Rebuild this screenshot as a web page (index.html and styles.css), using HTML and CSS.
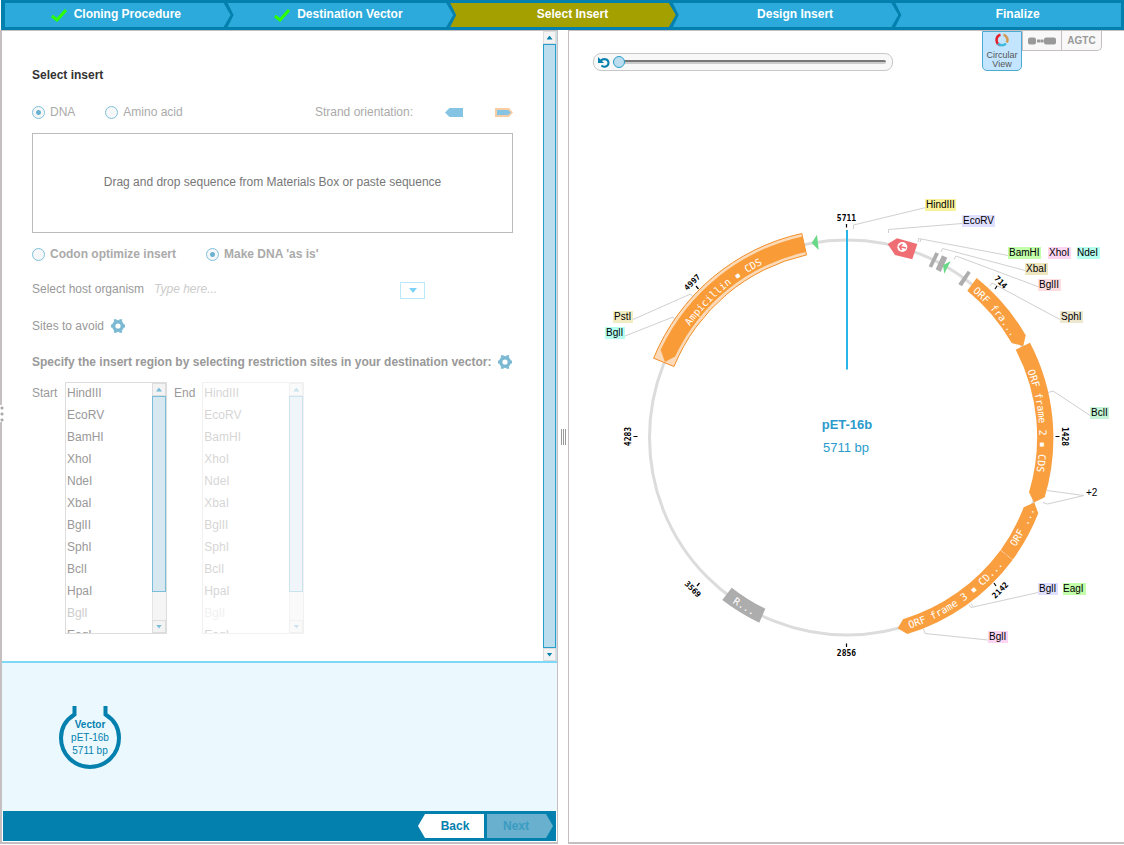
FILE: index.html
```html
<!DOCTYPE html>
<html lang="en">
<head>
<meta charset="utf-8">
<title>Cloning wizard - Select Insert</title>
<link rel="stylesheet" href="styles.css">
</head>
<body>
<div class="app">
  <nav class="steps" aria-label="Wizard steps">
    <button class="step step-first" type="button"><span class="step-label"><svg class="check" viewBox="0 0 16 13" aria-hidden="true"><path d="M1 7l5 4 9-10"/></svg>Cloning Procedure</span></button>
    <button class="step" type="button"><span class="step-label"><svg class="check" viewBox="0 0 16 13" aria-hidden="true"><path d="M1 7l5 4 9-10"/></svg>Destination Vector</span></button>
    <button class="step step-current" type="button" aria-current="step"><span class="step-label">Select Insert</span></button>
    <button class="step" type="button"><span class="step-label">Design Insert</span></button>
    <button class="step step-last" type="button"><span class="step-label">Finalize</span></button>
  </nav>

  <main class="workspace">
    <section class="left-panel">
      <span class="edge-handle"></span>
      <div class="form-area">
        <form class="form">
          <h1 class="title">Select insert</h1>
          <div class="row row-type">
            <label class="choice"><input class="radio" type="radio" name="type" checked>DNA</label>
            <label class="choice"><input class="radio" type="radio" name="type">Amino acid</label>
            <div class="strand">
              <span>Strand orientation:</span>
              <button class="tag" type="button" aria-label="Reverse strand"><svg viewBox="0 0 18 9"><path d="M0 4.500L4.500 0H18v9H4.500z" fill="#86c4e3"/></svg></button>
              <button class="tag" type="button" aria-label="Forward strand"><svg viewBox="0 0 18 9"><path d="M0 0h14l4 4.500L14 9H0z" fill="#f8cda4"/><path d="M2 2h11l3 2.500L13 7H2z" fill="#86c4e3"/></svg></button>
            </div>
          </div>
          <textarea class="sequence" aria-label="Sequence" placeholder="Drag and drop sequence from Materials Box or paste sequence"></textarea>
          <div class="row row-mode">
            <label class="choice"><input class="radio" type="radio" name="mode">Codon optimize insert</label>
            <label class="choice"><input class="radio" type="radio" name="mode" checked>Make DNA 'as is'</label>
          </div>
          <div class="row row-host">
            <label for="host">Select host organism</label>
            <input class="host-input" id="host" type="text" placeholder="Type here...">
            <button class="drop-button" type="button" aria-label="Show organisms"><svg viewBox="0 0 8 5"><path d="M0 0h8L4 5z"/></svg></button>
          </div>
          <div class="row row-sites">
            <span>Sites to avoid</span>
            <button class="gear" type="button" aria-label="Sites settings"><svg viewBox="0 0 14 14"><use href="#gear-shape"/></svg></button>
          </div>
          <div class="row row-specify">
            <span>Specify the insert region by selecting restriction sites in your destination vector:</span>
            <button class="gear" type="button" aria-label="Restriction site settings"><svg viewBox="0 0 14 14"><g id="gear-shape"><circle cx="7" cy="7" r="4.300" fill="none" stroke="#7bb9d3" stroke-width="3.400"/><path d="M4.300 2.500V.3M9.700 2.500V.3M4.300 11.500v2.200M9.700 11.500v2.200M2 7H0M12 7h2" stroke="#7bb9d3" stroke-width="2.800"/></g></svg></button>
          </div>
          <div class="row row-lists">
            <label class="start-label" for="start">Start</label>
            <div class="list">
              <select class="options" id="start" size="11">
                <option>HindIII</option><option>EcoRV</option><option>BamHI</option><option>XhoI</option><option>NdeI</option><option>XbaI</option><option>BglII</option><option>SphI</option><option>BclI</option><option>HpaI</option><option disabled>BglI</option><option>EagI</option>
              </select>
              <div class="bar bar-list"><span class="arrow arrow-up"></span><span class="thumb"></span><span class="track"></span><span class="arrow arrow-down"></span></div>
            </div>
            <label for="end">End</label>
            <div class="list list-off">
              <select class="options" id="end" size="11">
                <option>HindIII</option><option>EcoRV</option><option>BamHI</option><option>XhoI</option><option>NdeI</option><option>XbaI</option><option>BglII</option><option>SphI</option><option>BclI</option><option>HpaI</option><option disabled>BglI</option><option>EagI</option>
              </select>
              <div class="bar bar-list"><span class="arrow arrow-up"></span><span class="thumb"></span><span class="track"></span><span class="arrow arrow-down"></span></div>
            </div>
          </div>
        </form>
        <div class="bar bar-main"><span class="arrow arrow-up"></span><span class="thumb"></span><span class="arrow arrow-down"></span></div>
      </div>
      <div class="vector-area">
        <svg class="vector" viewBox="0 0 62 63">
          <path d="M15.500 0v8.500C7.500 13.500 2 22 2 32a29 29 0 0 0 58 0c0-10-5.500-18.500-13.500-23.500V0" fill="none" stroke="#0480ae" stroke-width="4"/>
          <text class="vector-text vector-name" x="31" y="22">Vector</text>
          <text class="vector-text" x="31" y="35">pET-16b</text>
          <text class="vector-text" x="31" y="48">5711 bp</text>
        </svg>
      </div>
      <footer class="actions">
        <button class="action action-back" type="button">Back</button>
        <button class="action action-next" type="button" disabled>Next</button>
      </footer>
    </section>

    <div class="splitter"><span class="grip"></span></div>

    <section class="map-panel">
      <div class="toolbar">
        <div class="zoom">
          <button class="reset" type="button" aria-label="Reset rotation"><svg viewBox="0 0 12 11"><path d="M3 3.500C5 1.200 10.500 1.800 10.500 5.800 10.500 9.800 5.500 10.600 3.500 8.500" fill="none" stroke="#0480ae" stroke-width="2"/><path d="M0 0v6h6z" fill="#0480ae"/></svg></button>
          <input class="slider" type="range" min="0" max="100" value="0" aria-label="Rotate map">
        </div>
        <div class="views">
          <button class="view view-active" type="button">
            <svg class="ring" viewBox="0 0 14 14"><g fill="none" stroke-width="2.600"><path d="M5.500 12.200A5.400 5.400 0 0 1 5.500 1.800" stroke="#e3202c"/><path d="M8.500 1.800A5.400 5.400 0 0 1 11.800 9.500" stroke="#d39a55"/><path d="M3 10.500A5.400 5.400 0 0 0 11 10.500" stroke="#3fbbdc"/></g></svg>
            <span>Circular<br>View</span>
          </button>
          <button class="view" type="button" aria-label="Linear view"><svg class="linear" viewBox="0 0 28 8"><path d="M9 4h10" stroke="#bbb"/><rect width="8" height="7" y=".5" rx="2" fill="#999"/><rect x="16" width="12" height="7" y=".5" rx="2" fill="#999"/><path d="M9 2.500h3v3H9zM12.500 2.500h3v3h-3z" fill="#999"/></svg></button>
          <button class="view view-last" type="button">AGTC</button>
        </div>
      </div>

      <svg class="map" viewBox="569 72 555 700" role="img" aria-label="Circular map of pET-16b">
        <defs>
          <path id="arc-cw" d="M847 630A192.500 192.500 0 1 1 847 245A192.500 192.500 0 1 1 847 630"/>
          <path id="arc-ccw" d="M646 437.500A201 201 0 1 0 1048 437.500A201 201 0 1 0 646 437.500"/>
        </defs>
        <circle cx="847" cy="437.500" r="197.500" fill="none" stroke="#dcdcdc" stroke-width="3"/>

        <g class="leaders">
          <path d="M853.500 229v-4L926 207.500M888.500 233v-3.500L962 223.500M918 242l.5-3.500L1008 255.500M920 242l1-3M941 252l1.500-3.500L1025 270.500M954 259.500l2-3.500L1039 287M990 286l2-3L1060 319.500M1048 392.500l5-1.500L1091 416M1047 490.500l37 5L1047.500 504l-4.500-1.500M969 604.500l2 3L1038 592.500M971 603.500l2 3M923.500 629l1.500 4.500L988 640M693 297l-2.500-3L633 319.500M675 319.500l-2-2.500L625 336"/>
        </g>

        <path d="M801.800 233.500A209 209 0 0 0 653.600 358.200L674 366.500A187 187 0 0 1 806.500 254.900z" fill="#fcdab8" stroke="#f28e27"/>
        <path d="M802.400 236.400A206 206 0 0 0 660.600 349.800L665 362L675.100 356.600A190 190 0 0 1 805.900 252z" fill="#f99b37"/>
        <g fill="#f99f40">
          <path d="M976.700 278A206 206 0 0 1 1025.700 335.300L1023.300 346L1011.700 343A190 190 0 0 0 967.300 290.700z"/>
          <path d="M1030 342.700A206 206 0 0 1 1044.700 497.300L1034 502.400L1029 492.300A190 190 0 0 0 1015.700 349.700z"/>
          <path d="M1034.300 502.600L1038.300 513.300A206 206 0 0 1 1012.700 559.700L1000.700 550A190 190 0 0 0 1023.700 507.300z"/>
          <path d="M1012.600 559.900A206 206 0 0 1 907.300 634L897.700 628.300L903 619.300A190 190 0 0 0 1000.500 550.200z"/>
        </g>
        <path d="M731.700 587.700L722.300 600A206 206 0 0 0 759.300 622.700L765.300 608.700A190 190 0 0 1 731.700 587.700z" fill="#adadad"/>
        <path d="M887.700 244L897 238.300L917.300 244L912.300 259.300L895 255z" fill="#ee6e73"/>
        <circle cx="902.300" cy="247" r="5" fill="#fff"/>
        <path d="M906 248l-6.500-1.500M902.500 244l-3 2.500 2 3.500" fill="none" stroke="#ee6e73" stroke-width="1.600"/>
        <path d="M935.300 252.300L939 253.700L932 267.700L928.700 266.300zM942 255.300L947.300 257.700L940.700 272L935.700 269.300zM967.700 270.700L970.700 272.700L962 286.300L958.300 284z" fill="#adadad"/>
        <path d="M950.700 261L943 265.300L944.300 273.700zM811.700 243L817 234.700L818.700 250z" fill="#68d987"/>
        <path d="M847 230v139.500" stroke="#27b4e8" stroke-width="2"/>

        <g class="feature">
          <text><textPath href="#arc-cw" startOffset="38.800%">Ampicillin ▪ CDS</textPath></text>
          <text><textPath href="#arc-cw" startOffset="63.800%">ORF fra...</textPath></text>
          <text><textPath href="#arc-cw" startOffset="73.600%">ORF frame 2 ▪ CDS</textPath></text>
          <text><textPath href="#arc-ccw" startOffset="34.600%">ORF frame 3 ▪ CD...</textPath></text>
          <text><textPath href="#arc-ccw" startOffset="42.500%">ORF ...</textPath></text>
          <text><textPath href="#arc-ccw" startOffset="16.300%">R...</textPath></text>
        </g>

        <path d="M846.500 224v3.500M846.500 643.500v3.500M1055.500 436.500h4M633.500 436.500h4M696 286l2.500 3M997 286l-2 3M994 583l2 3M697 586l2.500-3" stroke="#000" stroke-width="1.200"/>
        <g class="ticks">
          <text x="846.500" y="221">5711</text>
          <text x="846.500" y="656">2856</text>
          <text transform="translate(1064.500 436.500) rotate(90)" y="3">1428</text>
          <text transform="translate(628 436.500) rotate(-90)" y="3">4283</text>
          <text transform="translate(692 282) rotate(-45)" y="3">4997</text>
          <text transform="translate(1001 282) rotate(45)" y="3">714</text>
          <text transform="translate(1000 590) rotate(-45)" y="3">2142</text>
          <text transform="translate(693 589) rotate(45)" y="3">3569</text>
        </g>

        <g class="sites">
          <rect x="925" y="199" width="31" height="12" fill="#f8f19a"/><text x="926" y="208">HindIII</text>
          <rect x="962" y="215" width="33" height="12" fill="#dfdfff"/><text x="963" y="224">EcoRV</text>
          <rect x="1008" y="247" width="33" height="12" fill="#c3ffab"/><text x="1009" y="256">BamHI</text>
          <rect x="1048" y="247" width="23" height="12" fill="#fcd5f3"/><text x="1049" y="256">XhoI</text>
          <rect x="1077" y="247" width="23" height="12" fill="#b5fff1"/><text x="1077" y="256">NdeI</text>
          <rect x="1025" y="263" width="23" height="12" fill="#eee6c0"/><text x="1026" y="272">XbaI</text>
          <rect x="1038" y="279" width="23" height="12" fill="#fddde0"/><text x="1039" y="288">BglII</text>
          <rect x="1060" y="311" width="23" height="12" fill="#ece7ce"/><text x="1061" y="320">SphI</text>
          <rect x="1090" y="407" width="19" height="12" fill="#c5f3d5"/><text x="1091" y="416">BclI</text>
          <text x="1086" y="496">+2</text>
          <rect x="1038" y="583" width="20" height="12" fill="#dfdfff"/><text x="1039" y="592">BglI</text>
          <rect x="1063" y="583" width="23" height="12" fill="#c3ffab"/><text x="1063" y="592">EagI</text>
          <rect x="988" y="631" width="20" height="12" fill="#fcd5f3"/><text x="989" y="640">BglI</text>
          <rect x="613" y="311" width="20" height="12" fill="#f2ecc3"/><text x="614" y="320">PstI</text>
          <rect x="605" y="327" width="20" height="12" fill="#b5fff1"/><text x="606" y="336">BglI</text>
        </g>

        <text class="plasmid plasmid-name" x="847" y="429">pET-16b</text>
        <text class="plasmid" x="846" y="452">5711 bp</text>
      </svg>
    </section>
  </main>
</div>
</body>
</html>
```
FILE: styles.css
```css
* { box-sizing: border-box; }

body {
  margin: 0;
  background: #fff;
  color: #999;
  font: 12px/14px "Liberation Sans", Arial, sans-serif;
}

button, input, select, textarea {
  margin: 0;
  padding: 0;
  border: 0;
  border-radius: 0;
  background: none;
  color: inherit;
  font: inherit;
  outline: 0;
}

.app {
  display: flex;
  flex-direction: column;
  min-height: 100vh;
  padding-bottom: 1px;
}

/* Wizard steps */
.steps {
  display: flex;
  height: 30px;
  margin-left: 1px;
  padding: 3px 3px 3px 4px;
  background: #0480ae;
}

.step {
  display: flex;
  flex: 1 1 0;
  justify-content: center;
  height: 24px;
  padding-left: 19px;
  background: #2caadb;
  color: #fff;
  font-weight: bold;
  line-height: 22px;
  clip-path: polygon(0 0, calc(100% - 7px) 0, 100% 50%, calc(100% - 7px) 100%, 0 100%, 6px 50%);
}

.step + .step { margin-left: -3px; }
.step-first { clip-path: polygon(0 0, calc(100% - 7px) 0, 100% 50%, calc(100% - 7px) 100%, 0 100%); }
.step-last { clip-path: polygon(0 0, 100% 0, 100% 100%, 0 100%, 6px 50%); }
.step-current { background: #a3a000; }
.step-label { position: relative; }

.check {
  position: absolute;
  top: 6px;
  right: 100%;
  width: 16px;
  height: 13px;
  margin-right: 7px;
  fill: none;
  stroke: #2cff05;
  stroke-width: 3;
}

/* Panels */
.workspace {
  display: grid;
  flex: 1;
  grid-template-columns: minmax(0, 558fr) 10px minmax(0, 556fr);
}

.left-panel {
  position: relative;
  display: flex;
  flex-direction: column;
  border: solid #c6bfc2;
  border-width: 1px 1px 2px 2px;
}

.edge-handle {
  position: absolute;
  top: 374px;
  left: -2px;
  width: 4px;
  height: 17px;
  background: radial-gradient(circle, #aaa 1px, #fff 2px) 0 0 / 4px 6px;
}

.form-area {
  display: flex;
  flex: 1;
}

.form {
  flex: 1;
  min-width: 0;
  padding: 37px 30px 27px;
}

.title {
  margin: 0 0 23px;
  color: #333;
  font-size: 12px;
  line-height: 14px;
}

.row {
  display: flex;
  align-items: center;
}

.row-type, .row-mode {
  gap: 30px;
  margin-bottom: 14px;
  color: #aaa;
}

.row-mode {
  margin: 14px 0 21px;
  font-weight: bold;
}

.choice {
  display: flex;
  align-items: center;
  gap: 5px;
}

.radio {
  appearance: none;
  width: 13px;
  height: 13px;
  border: 1px solid #7fc0dc;
  border-radius: 50%;
  background: #f5f7f8;
}

.radio:checked { background: radial-gradient(circle, #6db1d0 2px, #f5f7f8 3px); }

.strand {
  display: flex;
  align-items: center;
  gap: 32px;
  margin-left: auto;
}

.tag {
  width: 18px;
  height: 9px;
}

.tag svg, .gear svg, .reset svg, .drop-button svg, .map, .vector { display: block; }

.sequence {
  display: block;
  width: 100%;
  height: 100px;
  padding-top: 41px;
  border: 1px solid #bbb;
  text-align: center;
  resize: none;
}

.sequence::placeholder { color: #777; }

.row-host {
  align-items: flex-start;
  margin-bottom: 20px;
}

.host-input {
  width: 246px;
  height: 14px;
  margin-left: 10px;
  font-style: italic;
}

.host-input::placeholder { color: #ccc; }

.drop-button {
  display: grid;
  place-items: center;
  width: 25px;
  height: 17px;
  border: 1px solid #b9e9fb;
}

.drop-button svg {
  width: 8px;
  height: 5px;
  fill: #7dd3f5;
}

.row-sites, .row-specify { gap: 7px; }
.row-sites { margin-bottom: 22px; }

.row-specify {
  margin-bottom: 13px;
  font-weight: bold;
  white-space: nowrap;
}

.gear {
  width: 14px;
  height: 14px;
}

.row-lists {
  align-items: flex-start;
  gap: 7px;
}

.row-lists label { padding-top: 4px; }
.start-label { width: 26px; }

.list {
  display: flex;
  width: 102px;
  height: 252px;
  border: 1px solid #ddd;
}

.list-off { opacity: .4; }

.options {
  flex: 1;
  height: 250px;
  overflow: hidden;
  scrollbar-width: none;
}

.options option {
  height: 22px;
  min-height: 22px;
  padding: 3px 1px 0;
  color: #999;
}

.options option:disabled { color: #ccc; }
.list-off option:disabled { color: #ddd; }

/* Scroll bars */
.bar {
  display: flex;
  flex-direction: column;
  width: 14px;
}

.bar-main { border-right: 1px solid #c6e0ec; }

.arrow {
  display: grid;
  place-items: center;
  height: 13px;
  border: 1px solid #ddd;
  background: #f3f3f3;
}

.arrow::before {
  width: 6px;
  height: 4px;
  background: #0480ae;
  content: "";
}

.arrow-up::before { clip-path: polygon(50% 0, 100% 100%, 0 100%); }
.arrow-down::before { clip-path: polygon(0 0, 100% 0, 50% 100%); }

.thumb {
  flex: 1;
  border: 1px solid #2a9ecb;
  background: #bbdded;
}

.bar-list .thumb {
  flex: 196;
  border-color: #79bdd9;
  background: #d8e8f0;
}

.bar-list .arrow::before { background: #79bdd9; }

.track {
  flex: 28;
  border-left: 1px solid #e4e4e4;
  background: #f5f5f5;
}

/* Vector summary */
.vector-area {
  padding: 43px 57px 42px;
  border-top: 2px solid #7fd8f8;
  background: #ebf9fe;
}

.vector {
  width: 62px;
  height: 63px;
}

.vector-text {
  fill: #0480ae;
  font-size: 10px;
  text-anchor: middle;
}

.vector-name { font-weight: bold; }

.actions {
  display: flex;
  justify-content: flex-end;
  gap: 3px;
  margin: 0 1px 1px;
  padding: 3px;
  background: #0480ae;
}

.action {
  width: 66px;
  height: 24px;
  font-weight: bold;
}

.action-back {
  padding-left: 8px;
  background: #fff;
  color: #0480ae;
  clip-path: polygon(7px 0, 100% 0, 100% 100%, 7px 100%, 0 50%);
}

.action-next {
  padding-right: 8px;
  background: #68b0cd;
  color: #3b9bc2;
  clip-path: polygon(0 0, calc(100% - 7px) 0, 100% 50%, calc(100% - 7px) 100%, 0 100%);
}

.splitter {
  display: grid;
  place-items: center;
}

.grip {
  width: 5px;
  height: 16px;
  background: repeating-linear-gradient(90deg, #999 0 1px, #fff 1px 2px);
}

/* Map */
.map-panel {
  border: solid #c6bfc2;
  border-width: 1px 0 2px 1px;
}

.toolbar {
  display: flex;
  align-items: flex-start;
  justify-content: space-between;
  height: 41px;
  padding: 0 22px 0 24px;
}

.zoom {
  display: flex;
  align-items: center;
  width: 300px;
  height: 18px;
  margin-top: 22px;
  padding: 0 6px 0 4px;
  border: 1px solid #c8c8c8;
  border-radius: 8px;
  background: #f8f8f8;
}

.reset {
  width: 12px;
  height: 11px;
}

.slider {
  appearance: none;
  flex: 1;
  min-width: 0;
  height: 12px;
  margin-left: 3px;
}

.slider::-webkit-slider-runnable-track {
  height: 4px;
  border-top: 2px solid #777;
  border-radius: 2px;
  background: #ccc;
}

.slider::-webkit-slider-thumb {
  appearance: none;
  width: 12px;
  height: 12px;
  margin-top: -6px;
  border: 1px solid #2a9ecb;
  border-radius: 50%;
  background: #bbdded;
}

.views {
  display: flex;
  align-items: flex-start;
}

.view {
  display: flex;
  flex-direction: column;
  align-items: center;
  justify-content: center;
  width: 40px;
  height: 20px;
  border: 1px solid #c6bfc2;
  border-top: 0;
  background: #f8f8f8;
  color: #999;
  font-size: 10px;
  font-weight: bold;
}

.view-last {
  border-left: 0;
  border-radius: 0 0 5px 0;
}

.view-active {
  gap: 4px;
  height: 40px;
  border: 1px solid #4cabd2;
  border-radius: 0 0 5px 5px;
  background: #c4e5ff;
  color: #555;
  font-size: 9px;
  font-weight: normal;
  line-height: 9px;
}

.ring {
  width: 14px;
  height: 14px;
}

.linear {
  width: 28px;
  height: 8px;
}

.map {
  width: 100%;
  height: auto;
}

.leaders {
  fill: none;
  stroke: #d0d0d0;
}

.feature {
  fill: #fff;
  font: 10px "DejaVu Sans Mono", monospace;
  text-anchor: middle;
}

.ticks {
  fill: #000;
  font: bold 8px "DejaVu Sans Mono", monospace;
  text-anchor: middle;
}

.sites text {
  fill: #000;
  font-size: 10px;
}

.plasmid {
  fill: #2a9bcc;
  font-size: 13px;
  text-anchor: middle;
}

.plasmid-name { font-weight: bold; }
```
